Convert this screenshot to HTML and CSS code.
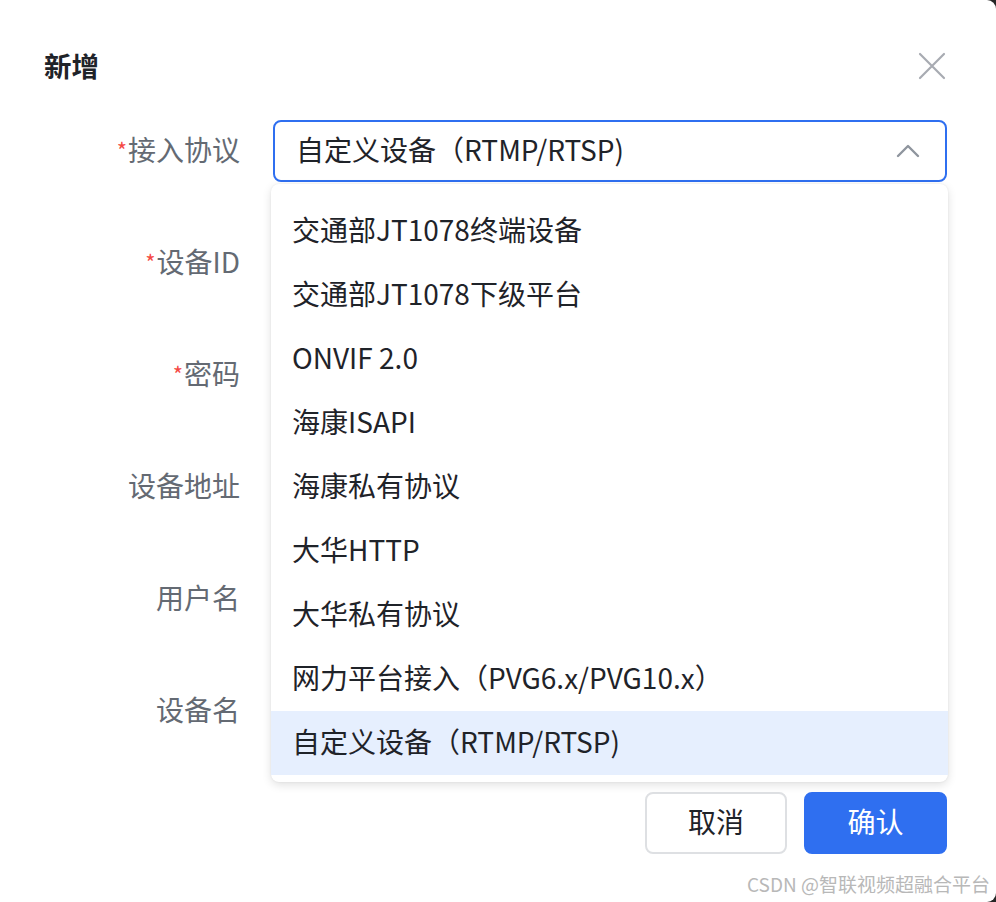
FILE: index.html
```html
<!DOCTYPE html>
<html lang="zh-CN">
<head>
<meta charset="utf-8">
<title>新增</title>
<link rel="stylesheet" href="styles.css">
</head>
<body>
<div class="dialog">
  <div class="header">
    <span class="title">新增</span>
    <button class="close" aria-label="关闭">
      <svg width="28" height="28" viewBox="0 0 28 28"><path d="M2 2 L26 26 M26 2 L2 26" stroke="#a8abb2" stroke-width="2.2" stroke-linecap="round" fill="none"/></svg>
    </button>
  </div>
  <div class="form">
    <div class="row">
      <label class="label"><span class="req">*</span>接入协议</label>
      <div class="control">
        <div class="select is-open">
          <span class="select-value">自定义设备（RTMP/RTSP)</span>
          <svg class="chevron" width="24" height="14" viewBox="0 0 24 14"><path d="M2 12 L12 2 L22 12" stroke="#8f959e" stroke-width="2.4" fill="none" stroke-linecap="round" stroke-linejoin="round"/></svg>
        </div>
        <ul class="dropdown">
          <li class="option">交通部JT1078终端设备</li>
          <li class="option">交通部JT1078下级平台</li>
          <li class="option">ONVIF 2.0</li>
          <li class="option">海康ISAPI</li>
          <li class="option">海康私有协议</li>
          <li class="option">大华HTTP</li>
          <li class="option">大华私有协议</li>
          <li class="option">网力平台接入（PVG6.x/PVG10.x）</li>
          <li class="option selected">自定义设备（RTMP/RTSP)</li>
        </ul>
      </div>
    </div>
    <div class="row">
      <label class="label"><span class="req">*</span>设备ID</label>
      <div class="control"><div class="input"></div></div>
    </div>
    <div class="row">
      <label class="label"><span class="req">*</span>密码</label>
      <div class="control"><div class="input"></div></div>
    </div>
    <div class="row">
      <label class="label">设备地址</label>
      <div class="control"><div class="input"></div></div>
    </div>
    <div class="row">
      <label class="label">用户名</label>
      <div class="control"><div class="input"></div></div>
    </div>
    <div class="row">
      <label class="label">设备名</label>
      <div class="control"><div class="input"></div></div>
    </div>
  </div>
  <div class="footer">
    <button class="btn btn-default">取消</button>
    <button class="btn btn-primary">确认</button>
  </div>
  <div class="watermark">CSDN @智联视频超融合平台</div>
</div>
</body>
</html>
```

FILE: styles.css
```css
html, body {
  margin: 0;
  padding: 0;
  background: #262626;
  overflow: hidden;
}
body {
  font-family: "Noto Sans CJK SC", "Noto Sans", sans-serif;
  color: #1f2329;
}
.dialog {
  position: relative;
  width: 996px;
  height: 902px;
  background: #fff;
  border-radius: 0 9px 9px 0;
  box-sizing: border-box;
}
.header {
  height: 120px;
  box-sizing: border-box;
  padding: 44px 50px 0 44px;
  display: flex;
  justify-content: space-between;
  align-items: flex-start;
}
.title {
  font-size: 27.5px;
  line-height: 42px;
  font-weight: 600;
  color: #1f2329;
}
.close {
  margin-top: 8px;
  padding: 0;
  border: 0;
  background: none;
  width: 28px;
  height: 28px;
  display: block;
}
.form {
  display: flex;
  flex-direction: column;
  gap: 50px;
}
.row {
  display: flex;
  align-items: center;
  height: 62px;
}
.label {
  width: 273px;
  padding: 0 33px 4px 0;
  box-sizing: border-box;
  text-align: right;
  font-size: 28px;
  color: #646a73;
  line-height: 58px;
}
.req {
  color: #f54a45;
  font-size: 22px;
  margin-right: 1px;
  vertical-align: 2px;
}
.control {
  position: relative;
  width: 674px;
  height: 62px;
}
.select, .input {
  height: 62px;
  box-sizing: border-box;
  border: 2px solid #dee0e3;
  border-radius: 8px;
  background: #fff;
}
.select {
  display: flex;
  align-items: center;
  justify-content: space-between;
  padding: 0 25px 0 21px;
  font-size: 28px;
  color: #1f2329;
}
.select-value {
  padding-bottom: 4px;
}
.select.is-open {
  border-color: #2f6ff0;
}
.chevron {
  display: block;
}
.dropdown {
  position: absolute;
  left: -2px;
  top: 64px;
  width: 677px;
  margin: 0;
  padding: 15px 0 7px;
  list-style: none;
  background: #fff;
  border-radius: 8px;
  box-shadow: 0 3px 10px rgba(0, 0, 0, 0.12), 0 0 2px rgba(0, 0, 0, 0.08);
  z-index: 10;
}
.option {
  height: 64px;
  box-sizing: border-box;
  line-height: 60px;
  padding: 0 0 4px 21px;
  font-size: 28px;
  color: #1f2329;
  white-space: nowrap;
}
.option.selected {
  background: #e6effe;
}
.footer {
  display: flex;
  justify-content: flex-end;
  gap: 17px;
  padding: 50px 49px 0 0;
}
.btn {
  height: 62px;
  width: 143px;
  border-radius: 8px;
  font-family: inherit;
  font-size: 28px;
  box-sizing: border-box;
  padding: 0 0 4px;
}
.btn-default {
  width: 142px;
  background: #fff;
  border: 2px solid #dee0e3;
  color: #1f2329;
}
.btn-primary {
  background: #2f6ff0;
  border: 2px solid #2f6ff0;
  color: #fff;
}
.watermark {
  position: absolute;
  right: 6px;
  bottom: 5px;
  font-size: 19px;
  color: #b8b8b8;
  white-space: nowrap;
}
```
